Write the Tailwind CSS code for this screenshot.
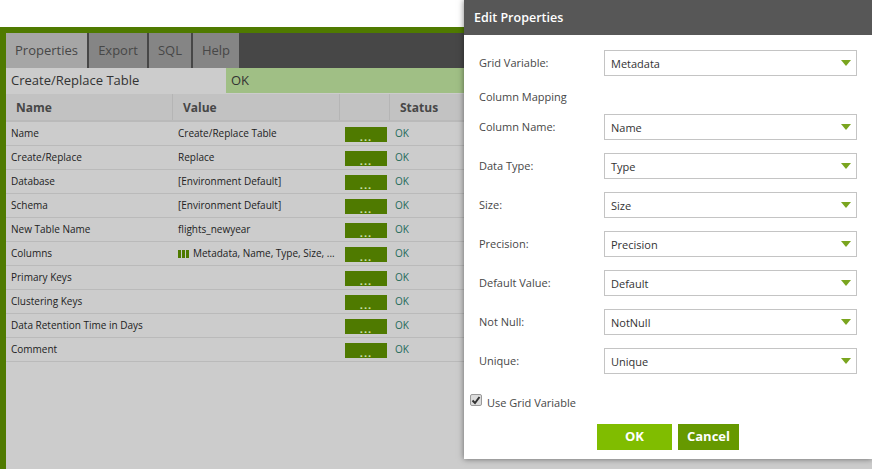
<!DOCTYPE html>
<html lang="en">
<head>
<meta charset="UTF-8">
<title>Edit Properties</title>
<script src="https://cdn.jsdelivr.net/npm/@tailwindcss/browser@4"></script>
</head>
<body class="relative w-[872px] h-[469px] overflow-hidden bg-white font-['Open_Sans',sans-serif]">
  <!-- Background panel -->
  <div class="mt-[27px] h-[442px] border-t-[6px] border-l-[6px] border-[#4f7a00] bg-[#cccccc] flex flex-col">
    <div class="flex gap-[2px] h-[35px] bg-[#474747] text-[13px] text-[#474747] shrink-0">
      <div class="w-[81px] bg-[#a6a6a6] flex items-center justify-center">Properties</div>
      <div class="w-[58px] bg-[#858585] flex items-center justify-center">Export</div>
      <div class="w-[42px] bg-[#858585] flex items-center justify-center">SQL</div>
      <div class="w-[46px] bg-[#858585] flex items-center justify-center">Help</div>
    </div>
    <div class="flex h-[25px] text-[13px] text-[#333333] shrink-0">
      <div class="w-[220px] pl-[5px] flex items-center">Create/Replace Table</div>
      <div class="flex-1 bg-[#a0bf85] pl-[5px] flex items-center">OK</div>
    </div>
    <div class="flex h-[28px] mt-px border-b-2 border-[#bababa] bg-[#c2c2c2] text-[12px] font-bold text-[#474747] shrink-0">
      <div class="w-[167px] pl-[10px] pt-[2px] flex items-center border-r border-[#b5b5b5]">Name</div>
      <div class="w-[167px] pl-[10px] pt-[2px] flex items-center border-r border-[#b5b5b5]">Value</div>
      <div class="w-[50px] border-r border-[#b5b5b5]"></div>
      <div class="flex-1 pl-[10px] pt-[2px] flex items-center">Status</div>
    </div>
    <div class="text-[10px] text-[#222222]">
      <div class="flex items-center h-[24px] border-b border-[#bababa]"><div class="w-[166px] pl-[5px]">Name</div><div class="w-[173px] pl-[6px]">Create/Replace Table</div><div class="w-[42px] h-[15px] translate-y-px bg-[#4f7a00] text-[#cfe0b0] text-[11px] font-bold leading-[19px] tracking-[1px] text-center">...</div><div class="pl-2 text-[#1f6b5a]">OK</div></div>
      <div class="flex items-center h-[24px] border-b border-[#bababa]"><div class="w-[166px] pl-[5px]">Create/Replace</div><div class="w-[173px] pl-[6px]">Replace</div><div class="w-[42px] h-[15px] translate-y-px bg-[#4f7a00] text-[#cfe0b0] text-[11px] font-bold leading-[19px] tracking-[1px] text-center">...</div><div class="pl-2 text-[#1f6b5a]">OK</div></div>
      <div class="flex items-center h-[24px] border-b border-[#bababa]"><div class="w-[166px] pl-[5px]">Database</div><div class="w-[173px] pl-[6px]">[Environment Default]</div><div class="w-[42px] h-[15px] translate-y-px bg-[#4f7a00] text-[#cfe0b0] text-[11px] font-bold leading-[19px] tracking-[1px] text-center">...</div><div class="pl-2 text-[#1f6b5a]">OK</div></div>
      <div class="flex items-center h-[24px] border-b border-[#bababa]"><div class="w-[166px] pl-[5px]">Schema</div><div class="w-[173px] pl-[6px]">[Environment Default]</div><div class="w-[42px] h-[15px] translate-y-px bg-[#4f7a00] text-[#cfe0b0] text-[11px] font-bold leading-[19px] tracking-[1px] text-center">...</div><div class="pl-2 text-[#1f6b5a]">OK</div></div>
      <div class="flex items-center h-[24px] border-b border-[#bababa]"><div class="w-[166px] pl-[5px]">New Table Name</div><div class="w-[173px] pl-[6px]">flights_newyear</div><div class="w-[42px] h-[15px] translate-y-px bg-[#4f7a00] text-[#cfe0b0] text-[11px] font-bold leading-[19px] tracking-[1px] text-center">...</div><div class="pl-2 text-[#1f6b5a]">OK</div></div>
      <div class="flex items-center h-[24px] border-b border-[#bababa]"><div class="w-[166px] pl-[5px]">Columns</div><div class="w-[173px] pl-[6px] flex items-center gap-[4px]"><svg width="11" height="8" viewBox="0 0 11 8" class="shrink-0"><path fill="#4f7a00" d="M0 0h3v8H0zM4 0h3v8H4zM8 0h3v8H8z"/></svg><span>Metadata, Name, Type, Size, ...</span></div><div class="w-[42px] h-[15px] translate-y-px bg-[#4f7a00] text-[#cfe0b0] text-[11px] font-bold leading-[19px] tracking-[1px] text-center">...</div><div class="pl-2 text-[#1f6b5a]">OK</div></div>
      <div class="flex items-center h-[24px] border-b border-[#bababa]"><div class="w-[166px] pl-[5px]">Primary Keys</div><div class="w-[173px]"></div><div class="w-[42px] h-[15px] translate-y-px bg-[#4f7a00] text-[#cfe0b0] text-[11px] font-bold leading-[19px] tracking-[1px] text-center">...</div><div class="pl-2 text-[#1f6b5a]">OK</div></div>
      <div class="flex items-center h-[24px] border-b border-[#bababa]"><div class="w-[166px] pl-[5px]">Clustering Keys</div><div class="w-[173px]"></div><div class="w-[42px] h-[15px] translate-y-px bg-[#4f7a00] text-[#cfe0b0] text-[11px] font-bold leading-[19px] tracking-[1px] text-center">...</div><div class="pl-2 text-[#1f6b5a]">OK</div></div>
      <div class="flex items-center h-[24px] border-b border-[#bababa]"><div class="w-[166px] pl-[5px]">Data Retention Time in Days</div><div class="w-[173px]"></div><div class="w-[42px] h-[15px] translate-y-px bg-[#4f7a00] text-[#cfe0b0] text-[11px] font-bold leading-[19px] tracking-[1px] text-center">...</div><div class="pl-2 text-[#1f6b5a]">OK</div></div>
      <div class="flex items-center h-[24px] border-b border-[#bababa]"><div class="w-[166px] pl-[5px]">Comment</div><div class="w-[173px]"></div><div class="w-[42px] h-[15px] translate-y-px bg-[#4f7a00] text-[#cfe0b0] text-[11px] font-bold leading-[19px] tracking-[1px] text-center">...</div><div class="pl-2 text-[#1f6b5a]">OK</div></div>
    </div>
  </div>

  <!-- Modal -->
  <div class="absolute left-[464px] top-0 w-[408px] h-[459px] bg-white shadow-[0_0_6px_rgba(0,0,0,0.5)] flex flex-col">
    <div class="h-[35px] bg-[#575757] text-white text-[12.5px] font-semibold pl-[10px] pt-px flex items-center shrink-0">Edit Properties</div>
    <div class="pl-[15px] text-[11px] text-[#474747]">
      <div class="flex items-center h-[26px] mt-[15px]"><div class="w-[125px]">Grid Variable:</div><div class="relative w-[253px] h-[26px] border border-[#c4c4c4] pl-[6px] pt-[2px] flex items-center text-[#333333]">Metadata<svg width="10" height="6" viewBox="0 0 10 6" class="absolute right-[5px] top-[9px]"><path fill="#7aa51f" d="M0 0h10L5 6z"/></svg></div></div>
      <div class="h-[38px] pt-[13px] leading-[16px]">Column Mapping</div>
      <div class="flex flex-col gap-[13px]">
        <div class="flex items-center h-[26px]"><div class="w-[125px]">Column Name:</div><div class="relative w-[253px] h-[26px] border border-[#c4c4c4] pl-[6px] pt-[2px] flex items-center text-[#333333]">Name<svg width="10" height="6" viewBox="0 0 10 6" class="absolute right-[5px] top-[9px]"><path fill="#7aa51f" d="M0 0h10L5 6z"/></svg></div></div>
        <div class="flex items-center h-[26px]"><div class="w-[125px]">Data Type:</div><div class="relative w-[253px] h-[26px] border border-[#c4c4c4] pl-[6px] pt-[2px] flex items-center text-[#333333]">Type<svg width="10" height="6" viewBox="0 0 10 6" class="absolute right-[5px] top-[9px]"><path fill="#7aa51f" d="M0 0h10L5 6z"/></svg></div></div>
        <div class="flex items-center h-[26px]"><div class="w-[125px]">Size:</div><div class="relative w-[253px] h-[26px] border border-[#c4c4c4] pl-[6px] pt-[2px] flex items-center text-[#333333]">Size<svg width="10" height="6" viewBox="0 0 10 6" class="absolute right-[5px] top-[9px]"><path fill="#7aa51f" d="M0 0h10L5 6z"/></svg></div></div>
        <div class="flex items-center h-[26px]"><div class="w-[125px]">Precision:</div><div class="relative w-[253px] h-[26px] border border-[#c4c4c4] pl-[6px] pt-[2px] flex items-center text-[#333333]">Precision<svg width="10" height="6" viewBox="0 0 10 6" class="absolute right-[5px] top-[9px]"><path fill="#7aa51f" d="M0 0h10L5 6z"/></svg></div></div>
        <div class="flex items-center h-[26px]"><div class="w-[125px]">Default Value:</div><div class="relative w-[253px] h-[26px] border border-[#c4c4c4] pl-[6px] pt-[2px] flex items-center text-[#333333]">Default<svg width="10" height="6" viewBox="0 0 10 6" class="absolute right-[5px] top-[9px]"><path fill="#7aa51f" d="M0 0h10L5 6z"/></svg></div></div>
        <div class="flex items-center h-[26px]"><div class="w-[125px]">Not Null:</div><div class="relative w-[253px] h-[26px] border border-[#c4c4c4] pl-[6px] pt-[2px] flex items-center text-[#333333]">NotNull<svg width="10" height="6" viewBox="0 0 10 6" class="absolute right-[5px] top-[9px]"><path fill="#7aa51f" d="M0 0h10L5 6z"/></svg></div></div>
        <div class="flex items-center h-[26px]"><div class="w-[125px]">Unique:</div><div class="relative w-[253px] h-[26px] border border-[#c4c4c4] pl-[6px] pt-[2px] flex items-center text-[#333333]">Unique<svg width="10" height="6" viewBox="0 0 10 6" class="absolute right-[5px] top-[9px]"><path fill="#7aa51f" d="M0 0h10L5 6z"/></svg></div></div>
      </div>
    </div>
    <div class="flex items-center gap-[5px] pl-[6px] mt-[20px] h-[12px] text-[11px] text-[#474747]">
      <div class="w-[12px] h-[12px] rounded-[2px] border border-[#9a9a9a] bg-[#dcdcdc] flex items-center justify-center"><svg width="10" height="9" viewBox="0 0 10 9"><path fill="none" stroke="#333333" stroke-width="2" d="M1.5 4.5l2.5 2.5 4.5-6"/></svg></div>
      <span class="translate-y-[3px]">Use Grid Variable</span>
    </div>
    <div class="flex gap-[6px] pl-[133px] mt-[18px] text-white text-[13px] font-bold">
      <div class="w-[75px] h-[26px] bg-[#80bd00] flex items-center justify-center">OK</div>
      <div class="w-[61px] h-[26px] bg-[#669900] flex items-center justify-center">Cancel</div>
    </div>
  </div>
</body>
</html>
